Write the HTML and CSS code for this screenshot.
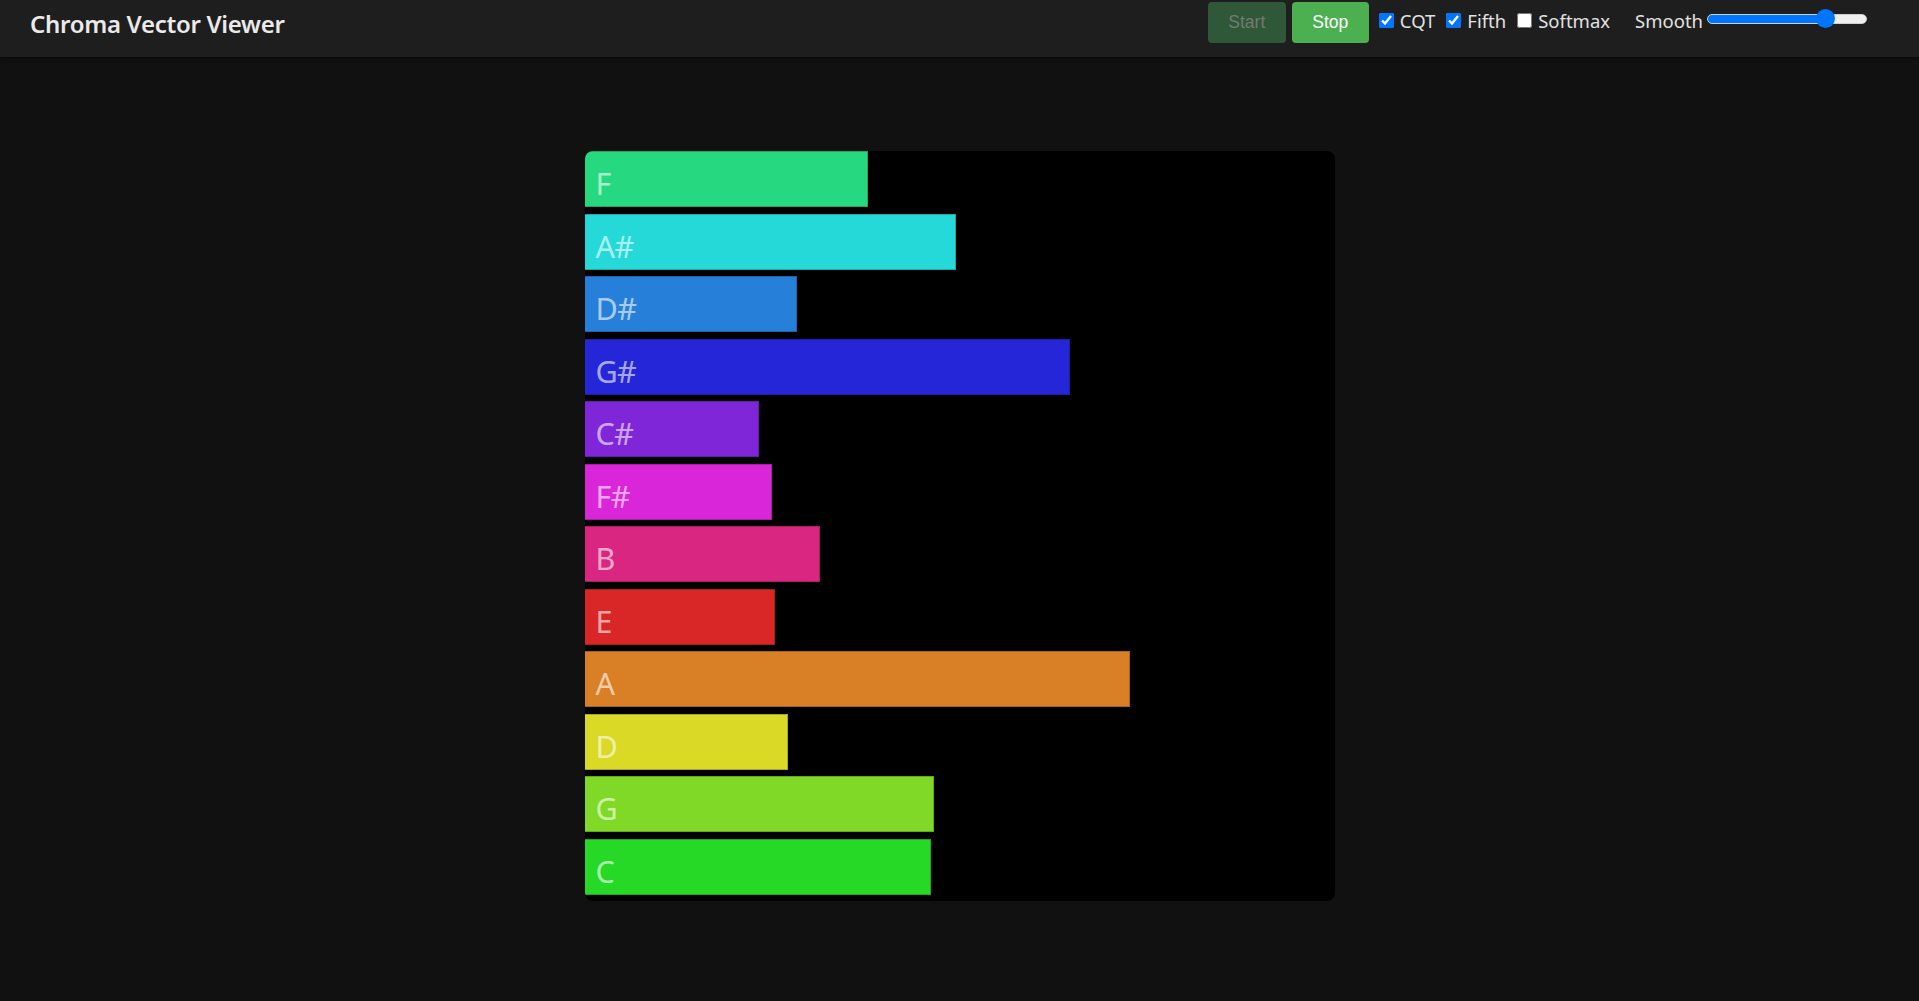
FILE: index.html
```html
<!DOCTYPE html>
<html lang="en">
<head>
<meta charset="utf-8">
<title>Chroma Vector Viewer</title>
<link rel="stylesheet" href="styles.css">
</head>
<body>
<header class="topbar">
  <h1 class="title">Chroma Vector Viewer</h1>
  <div class="controls">
    <button class="btn btn-start" disabled>Start</button>
    <button class="btn btn-stop">Stop</button>
    <label class="opt"><input type="checkbox" class="chk" checked><span>CQT</span></label>
    <label class="opt"><input type="checkbox" class="chk" checked><span>Fifth</span></label>
    <label class="opt"><input type="checkbox" class="chk"><span>Softmax</span></label>
    <label class="opt opt-smooth"><span>Smooth</span><input type="range" class="slider" min="0" max="100" value="78"></label>
  </div>
</header>
<main class="stage">
  <div class="chart">
    <div class="row"><div class="bar c-f" style="width:283px"><span class="lbl">F</span></div></div>
    <div class="row"><div class="bar c-as" style="width:371px"><span class="lbl">A#</span></div></div>
    <div class="row"><div class="bar c-ds" style="width:212px"><span class="lbl">D#</span></div></div>
    <div class="row"><div class="bar c-gs" style="width:485px"><span class="lbl">G#</span></div></div>
    <div class="row"><div class="bar c-cs" style="width:174px"><span class="lbl">C#</span></div></div>
    <div class="row"><div class="bar c-fs" style="width:187px"><span class="lbl">F#</span></div></div>
    <div class="row"><div class="bar c-b" style="width:235px"><span class="lbl">B</span></div></div>
    <div class="row"><div class="bar c-e" style="width:190px"><span class="lbl">E</span></div></div>
    <div class="row"><div class="bar c-a" style="width:545px"><span class="lbl">A</span></div></div>
    <div class="row"><div class="bar c-d" style="width:203px"><span class="lbl">D</span></div></div>
    <div class="row"><div class="bar c-g" style="width:349px"><span class="lbl">G</span></div></div>
    <div class="row"><div class="bar c-c" style="width:346px"><span class="lbl">C</span></div></div>
  </div>
</main>
</body>
</html>
```
FILE: styles.css
```css
html, body {
  margin: 0;
  padding: 0;
  background: #111111;
  height: 100%;
}
body {
  font-family: "Noto Sans", "Open Sans", "DejaVu Sans", sans-serif;
  color: #e6e6e6;
}
.topbar {
  height: 57px;
  box-sizing: border-box;
  background: #1e1e1e;
  display: flex;
  justify-content: space-between;
  align-items: flex-start;
  padding: 0 52px 0 30px;
  box-shadow: 0 1px 3px rgba(0,0,0,0.5);
}
.title {
  margin: 0;
  padding-top: 8px;
  font-size: 24px;
  line-height: 32px;
  font-weight: 600;
  color: #eaeaea;
  letter-spacing: -0.3px;
}
.controls {
  display: flex;
  align-items: baseline;
  margin-top: 2px;
}
.btn {
  height: 41px;
  padding: 0 20px;
  border: none;
  border-radius: 4px;
  font-family: "Liberation Sans", Arial, sans-serif;
  font-size: 17.5px;
  line-height: 41px;
  cursor: pointer;
}
.btn-start {
  background: #2e5837;
  color: #727a73;
  width: 78px;
}
.btn-stop {
  background: #4caf50;
  color: #ffffff;
  width: 77px;
  margin-left: 6px;
  margin-right: 10px;
}
.opt {
  display: flex;
  align-items: baseline;
  gap: 6px;
  font-size: 18.5px;
  color: #e2e2e2;
  margin-right: 11px;
}
.chk {
  width: 15px;
  height: 15px;
  margin: 0;
  align-self: center;
  accent-color: #0075ff;
}
.opt-smooth {
  margin-left: 14px;
  margin-right: 0;
  gap: 4px;
}
.slider {
  -webkit-appearance: none;
  appearance: none;
  width: 160px;
  height: 10px;
  margin: 0;
  align-self: center;
  position: relative;
  top: -2px;
  border-radius: 5px;
  border: 1px solid #cfcfcf;
  box-sizing: border-box;
  background: linear-gradient(to right, #0075ff 0%, #0075ff 78%, #efefef 78%, #efefef 100%);
}
.slider::-webkit-slider-thumb {
  -webkit-appearance: none;
  appearance: none;
  width: 19px;
  height: 19px;
  border-radius: 50%;
  background: #0075ff;
  border: none;
}
.stage {
  display: flex;
  justify-content: center;
  padding-top: 94px;
}
.chart {
  width: 750px;
  height: 750px;
  background: #000000;
  border-radius: 8px;
  overflow: hidden;
  display: flex;
  flex-direction: column;
}
.row {
  height: 62.5px;
  flex: none;
}
.bar {
  height: 56px;
  box-sizing: border-box;
  border: 1px solid rgba(0,0,0,0.22);
  border-left: none;
  padding-left: 11px;
}
.lbl {
  display: block;
  font-family: "Noto Sans", "Open Sans", sans-serif;
  font-size: 30.5px;
  line-height: 62px;
  color: rgba(255,255,255,0.62);
  letter-spacing: -0.6px;
  white-space: nowrap;
}
.c-f  { background: hsl(150, 70%, 50%); }
.c-as { background: hsl(180, 70%, 50%); }
.c-ds { background: hsl(210, 70%, 50%); }
.c-gs { background: hsl(240, 70%, 50%); }
.c-cs { background: hsl(270, 70%, 50%); }
.c-fs { background: hsl(300, 70%, 50%); }
.c-b  { background: hsl(330, 70%, 50%); }
.c-e  { background: hsl(0, 70%, 50%); }
.c-a  { background: hsl(30, 70%, 50%); }
.c-d  { background: hsl(60, 70%, 50%); }
.c-g  { background: hsl(90, 70%, 50%); }
.c-c  { background: hsl(120, 70%, 50%); }
```
